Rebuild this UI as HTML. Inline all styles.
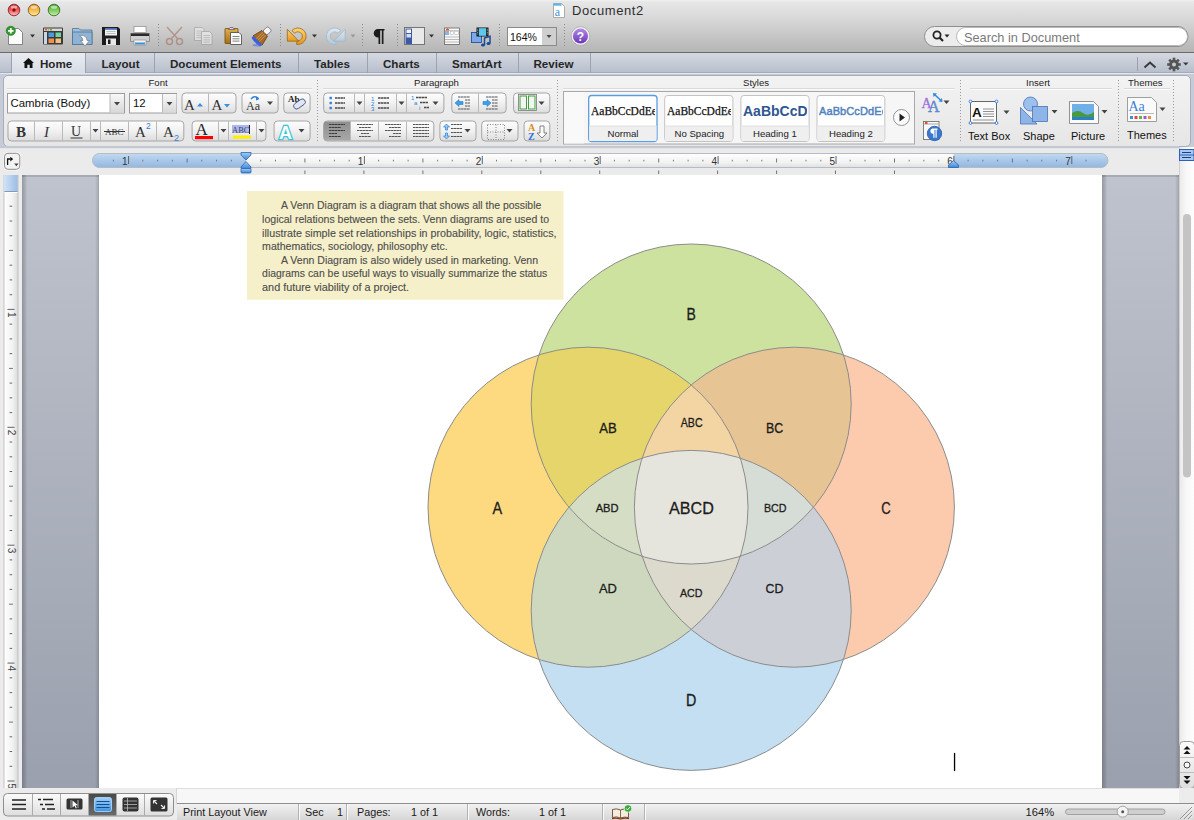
<!DOCTYPE html>
<html><head><meta charset="utf-8">
<style>
*{margin:0;padding:0;box-sizing:border-box}
html,body{width:1194px;height:820px;overflow:hidden;background:#ececec;font-family:"Liberation Sans",sans-serif;color:#222}
.a{position:absolute}
#top{left:0;top:0;width:1194px;height:53px;background:linear-gradient(#e8e8e8,#d0d0d0 50%,#b5b5b5);border-bottom:1px solid #6a6a6a;border-top:1px solid #efefef}
#tabs{left:0;top:53px;width:1194px;height:20px;background:linear-gradient(#d5d9e2,#b8bfcc);border-bottom:1px solid #a4abbb}
#ribbg{left:0;top:73px;width:1194px;height:74px;background:linear-gradient(#e3e6ec 0,#e3e6ec 1px,#c6ccd7 1px)}
#ribbon{left:3px;top:75px;width:1188px;height:72px;border-radius:5px;background:linear-gradient(#f3f3f3,#e6e6e6);border:1px solid #a9aeb8}
#rulerbg{left:0;top:147px;width:1179px;height:28px;background:#ebebeb}
#docarea{left:22px;top:175px;width:1157px;height:613px;background:linear-gradient(#bec3cd,#9aa0ad)}
#page{left:99px;top:175px;width:1003px;height:613px;background:#fff}
#hscroll{left:177px;top:788px;width:1017px;height:16px;background:linear-gradient(#f6f6f6,#e6e6e6)}
#status{left:177px;top:803px;width:1017px;height:17px;background:linear-gradient(#e9e9e9,#d8d8d8);border-top:1px solid #8a8a8a}
#vscroll{left:1179px;top:147px;width:15px;height:641px;background:linear-gradient(90deg,#e6e6e6,#fafafa)}
.t{position:absolute;white-space:nowrap}
</style></head><body>
<div id="top" class="a"></div>

<!-- TITLE + TOOLBAR -->
<svg class="a" style="left:0;top:0" width="1194" height="52">
<defs>
<linearGradient id="gR" x1="0" y1="0" x2="0" y2="1"><stop offset="0" stop-color="#c8282a"/><stop offset="0.5" stop-color="#f05a5a"/><stop offset="1" stop-color="#ffc0c0"/></linearGradient>
<linearGradient id="gY" x1="0" y1="0" x2="0" y2="1"><stop offset="0" stop-color="#d8861a"/><stop offset="0.5" stop-color="#f4b850"/><stop offset="1" stop-color="#ffec9a"/></linearGradient>
<linearGradient id="gG" x1="0" y1="0" x2="0" y2="1"><stop offset="0" stop-color="#3e9a2a"/><stop offset="0.5" stop-color="#7acb5a"/><stop offset="1" stop-color="#c8f0a8"/></linearGradient>
<linearGradient id="gFold" x1="0" y1="0" x2="0" y2="1"><stop offset="0" stop-color="#a9c6e0"/><stop offset="1" stop-color="#5f8db6"/></linearGradient>
<linearGradient id="gPaste" x1="0" y1="0" x2="0" y2="1"><stop offset="0" stop-color="#e0b052"/><stop offset="1" stop-color="#a86e12"/></linearGradient>
<linearGradient id="gHelp" x1="0" y1="0" x2="0" y2="1"><stop offset="0" stop-color="#b38be8"/><stop offset="1" stop-color="#6a34b8"/></linearGradient>
</defs>
<circle cx="14" cy="10" r="5.8" fill="url(#gR)" stroke="#7e2a2a" stroke-width="0.9"/>
<ellipse cx="14" cy="7.2" rx="3.2" ry="1.6" fill="#fff" opacity="0.55"/>
<circle cx="14" cy="10" r="1.7" fill="#8a0c0c"/>
<circle cx="34" cy="10" r="5.8" fill="url(#gY)" stroke="#8a5e1a" stroke-width="0.9"/>
<ellipse cx="34" cy="7.2" rx="3.2" ry="1.6" fill="#fff" opacity="0.55"/>
<circle cx="54" cy="10" r="5.8" fill="url(#gG)" stroke="#3a6e2a" stroke-width="0.9"/>
<ellipse cx="54" cy="7.2" rx="3.2" ry="1.6" fill="#fff" opacity="0.55"/>
<!-- title doc icon -->
<path d="M553.5 3.5h8l3 3v11h-11z" fill="#fff" stroke="#9a9a9a" stroke-width="0.8"/>
<rect x="553.5" y="3.5" width="8" height="2.2" fill="#5fb4e6"/>
<text x="554.8" y="15.8" font-family="Liberation Serif" font-size="12" fill="#4a8fd0">a</text>
<!-- new doc -->
<path d="M8.5 28.5h10l4 4v12h-14z" fill="#fbfbfb" stroke="#7a7a7a" stroke-width="0.9"/>
<circle cx="10.8" cy="30.8" r="4.6" fill="#2f9a2c" stroke="#1e6e1c" stroke-width="0.6"/>
<path d="M10.8 28v5.6M8 30.8h5.6" stroke="#fff" stroke-width="1.8"/>
<path d="M30 34.5h5l-2.5 3z" fill="#333"/>
<!-- gallery -->
<rect x="43" y="27.5" width="20" height="17" rx="1" fill="#3b3b3b"/>
<rect x="44" y="28.5" width="18" height="2.5" fill="#d8d8d8"/>
<circle cx="46" cy="29.7" r="0.9" fill="#e04030"/><circle cx="48.5" cy="29.7" r="0.9" fill="#e0a020"/><circle cx="51" cy="29.7" r="0.9" fill="#40a030"/>
<rect x="44" y="32" width="3" height="12" fill="#c9d6e6"/>
<rect x="48.5" y="32.5" width="5.5" height="4.5" fill="#4b9be0"/><rect x="55.5" y="32.5" width="5.5" height="4.5" fill="#6fd4a0"/>
<rect x="48.5" y="38.5" width="5.5" height="4.5" fill="#f0904a"/><rect x="55.5" y="38.5" width="5.5" height="4.5" fill="#f5c07a"/>
<!-- open folder -->
<path d="M72.5 31v-2.5h6.5l1.5 1.5h11.5v14.5h-19.5z" fill="url(#gFold)" stroke="#4d7498" stroke-width="0.8"/>
<path d="M72.5 32h19.5v12.5h-19.5z" fill="#8fb3d4" stroke="#4d7498" stroke-width="0.8"/>
<path d="M79.5 35.5q7-1 7.5 5h2.5l-4.5 5.5-4.5-5.5h2.5q-0.5-3.5-3.5-5z" fill="#fff" stroke="#6a6a6a" stroke-width="0.6"/>
<!-- floppy -->
<path d="M102 27h16l2 2v16h-18z" fill="#1c1c1c"/>
<rect x="105" y="28" width="12" height="7.5" fill="#f2f2f2"/>
<rect x="105" y="28" width="12" height="1.8" fill="#4a6fb8"/>
<path d="M106.5 31.5h9M106.5 33.5h9" stroke="#aaa" stroke-width="0.7"/>
<rect x="106" y="38.5" width="10" height="6.5" fill="#e8e8e8"/>
<rect x="108" y="39.5" width="2.5" height="4.5" fill="#1c1c1c"/>
<!-- printer -->
<rect x="134" y="26.5" width="12" height="6" fill="#fdfdfd" stroke="#8a8a8a" stroke-width="0.7"/>
<path d="M130.5 33.5h19v8h-19z" fill="#cfcfcf" stroke="#777" stroke-width="0.7"/>
<rect x="131" y="33.5" width="18" height="2.5" fill="#2a2a2a"/>
<rect x="134" y="40" width="12" height="5" fill="#f2f2f2" stroke="#888" stroke-width="0.6"/>
<rect x="135" y="42.5" width="10" height="2" fill="#3a8fd0"/>
<!-- separators -->
<g stroke="#8a8a8a" stroke-width="1" stroke-dasharray="1 2">
<path d="M158.5 24v24M280.5 24v24M362.5 24v24M397.5 24v24M499.5 24v24M564.5 24v24"/>
</g>
<!-- scissors (disabled) -->
<g opacity="0.45" fill="none" stroke="#9a5a44" stroke-width="1.5">
<path d="M167 27l11 12M182 27l-11 12"/>
<circle cx="169.5" cy="41.5" r="3"/><circle cx="179.5" cy="41.5" r="3"/>
</g>
<!-- copy (disabled) -->
<g opacity="0.55"><path d="M194.5 27.5h7.5l2 2v11h-9.5z" fill="#f2f2f2" stroke="#8a8a8a" stroke-width="0.8"/>
<path d="M196.5 31h5M196.5 33.2h5M196.5 35.4h5M196.5 37.6h5" stroke="#999" stroke-width="0.7"/>
<path d="M201.5 31.5h8l2.5 2.5v10.5h-10.5z" fill="#f6f6f6" stroke="#8a8a8a" stroke-width="0.8"/>
<path d="M203.5 35.5h6.5M203.5 37.7h6.5M203.5 39.9h6.5M203.5 42.1h6.5" stroke="#999" stroke-width="0.7"/></g>
<!-- paste -->
<rect x="225" y="28.5" width="13" height="15" rx="0.5" fill="url(#gPaste)" stroke="#6e4a10" stroke-width="0.8"/>
<path d="M228.5 29.5l1.5-2h3l1.5 2z" fill="#ddd" stroke="#555" stroke-width="0.7"/>
<path d="M230.5 32.5h8.5l2.5 2.5v9.5h-11z" fill="#fafafa" stroke="#444" stroke-width="0.8"/>
<path d="M232.5 36.5h7M232.5 38.8h7M232.5 41.1h7" stroke="#666" stroke-width="0.8"/>
<!-- brush -->
<g transform="translate(-2.5 1.5) rotate(45 264 35)">
<rect x="261" y="23.5" width="6" height="7" rx="1.8" fill="#f4f4f4" stroke="#6a6a6a" stroke-width="0.8"/>
<path d="M260 30.5h8l2.5 10h-13z" fill="#a36a2a" stroke="#5a3a10" stroke-width="0.7"/>
<path d="M262 31v9.5M264 31v9.5M266 31v9.5" stroke="#dca458" stroke-width="0.7"/>
<path d="M257.5 40.5h13l-0.5 2.5q-6 1.5-12 0z" fill="#3a5ee0"/>
</g>
<ellipse cx="257" cy="45.3" rx="4.5" ry="1.2" fill="#4a6ae8" opacity="0.5"/>
<!-- undo -->
<defs><linearGradient id="gUndo" x1="0" y1="0" x2="0" y2="1"><stop offset="0" stop-color="#fbd678"/><stop offset="1" stop-color="#e8961a"/></linearGradient>
<linearGradient id="gRedo" x1="0" y1="0" x2="0" y2="1"><stop offset="0" stop-color="#dfe9f2"/><stop offset="1" stop-color="#b5cadb"/></linearGradient></defs>
<g id="undoI">
<path d="M292 30.5A8.2 8.2 0 1 1 296.5 44.3L297.1 40.6A4.4 4.4 0 1 0 294.6 33.4Z" fill="url(#gUndo)" stroke="#9a6410" stroke-width="0.8"/>
<path d="M287.3 29.3v11.9h11.6z" fill="url(#gUndo)" stroke="#9a6410" stroke-width="0.8"/>
</g>
<path d="M312 34.5h5l-2.5 3z" fill="#333"/>
<g transform="translate(632.5 0) scale(-1 1)">
<path d="M292 30.5A8.2 8.2 0 1 1 296.5 44.3L297.1 40.6A4.4 4.4 0 1 0 294.6 33.4Z" fill="url(#gRedo)" stroke="#9fb6c8" stroke-width="0.8"/>
<path d="M287.3 29.3v11.9h11.6z" fill="url(#gRedo)" stroke="#9fb6c8" stroke-width="0.8"/>
</g>
<path d="M350.5 34.5h5l-2.5 3z" fill="#999"/>
<!-- pilcrow -->
<path d="M378 29h6.5v1.6h-1v13.4h-1.7v-13.4h-1.6v13.4h-1.7v-6.4h-0.5a4.3 4.3 0 0 1 0-8.6z" fill="#1c1c1c"/>
<!-- sidebar -->
<rect x="404.5" y="27.5" width="20" height="17" fill="#f2f2f2" stroke="#6a6a6a" stroke-width="0.9"/><rect x="412" y="28" width="12" height="16" fill="#e9e9e9"/>
<rect x="405.5" y="28.5" width="6.5" height="15.5" fill="#3a5aa8"/>
<rect x="406.5" y="29.5" width="4.5" height="3.5" fill="#f4f6fa"/><rect x="406.5" y="34" width="4.5" height="3.5" fill="#d6deee"/>
<path d="M429 34.5h5l-2.5 3z" fill="#333"/>
<!-- gallery2 -->
<rect x="444.5" y="28" width="15" height="16.5" fill="#f8f8f8" stroke="#666" stroke-width="0.8"/>
<path d="M445 30.5h14" stroke="#bbb" stroke-width="0.8"/>
<path d="M445.8 30.5q0.5-2.5 1.7-2.2q1.2 -0.3 1.7 2.2z" fill="#e8501a"/>
<rect x="445" y="31" width="4" height="4" fill="#8ab4e0"/>
<rect x="450.2" y="31.5" width="3.5" height="3" fill="#fff" stroke="#aaa" stroke-width="0.5"/><rect x="454.8" y="31.5" width="3.5" height="3" fill="#fff" stroke="#aaa" stroke-width="0.5"/>
<path d="M445 37h14M445 39.5h14M445 42h14" stroke="#aaa" stroke-width="0.8"/>
<!-- media -->
<rect x="471.5" y="32.5" width="10" height="10" fill="#7aa8e8" stroke="#2a4f98" stroke-width="0.9"/>
<rect x="476.5" y="27.5" width="12" height="9" fill="#151515"/>
<rect x="478.8" y="28.2" width="7.4" height="7.6" fill="#5cc8ee"/>
<path d="M477.6 28.8v6.4M487.4 28.8v6.4" stroke="#ccc" stroke-width="0.8" stroke-dasharray="0.8 0.8"/>
<path d="M484.5 45v-7l5.5-1.8v7" fill="none" stroke="#1a4a98" stroke-width="1.5"/>
<ellipse cx="483" cy="45" rx="2" ry="1.5" fill="#1a4a98"/><ellipse cx="488.5" cy="43.5" rx="2" ry="1.5" fill="#1a4a98"/>
<!-- zoom box -->
<rect x="507.5" y="27.5" width="49" height="18" fill="#fff" stroke="#8a8a8a" stroke-width="1"/>
<rect x="542" y="28" width="14" height="17" fill="#cfcfcf"/>
<path d="M546.5 35h5l-2.5 3z" fill="#444"/>
<text x="510" y="40.5" font-family="Liberation Sans" font-size="11" fill="#111" textLength="27" lengthAdjust="spacingAndGlyphs">164%</text>
<!-- help -->
<circle cx="580.5" cy="36" r="9.3" fill="#f2f2f2" stroke="#999" stroke-width="0.6"/>
<circle cx="580.5" cy="36" r="7.6" fill="url(#gHelp)"/>
<text x="580.5" y="40.5" text-anchor="middle" font-family="Liberation Sans" font-weight="bold" font-size="12" fill="#fff">?</text>
<!-- search -->
<rect x="924.5" y="26.5" width="263.5" height="20" rx="10" fill="#ececec" stroke="#8e8e8e" stroke-width="1"/>
<rect x="956.5" y="27.5" width="231" height="18" rx="9" fill="#fff" stroke="#a8a8a8" stroke-width="0.8"/>
<circle cx="937" cy="35" r="3.6" fill="none" stroke="#222" stroke-width="1.8"/>
<path d="M939.5 37.5l3.5 3.5" stroke="#222" stroke-width="2.2"/>
<path d="M944.5 34.5h5l-2.5 3z" fill="#222"/>
<text x="964" y="41.8" font-family="Liberation Sans" font-size="12.8" fill="#7a7a7a" textLength="115.7" lengthAdjust="spacingAndGlyphs">Search in Document</text>
</svg>
<div class="t" style="left:572px;top:3px;font-size:13px;letter-spacing:0.6px;color:#2e2e2e">Document2</div>

<div id="tabs" class="a"></div>
<svg class="a" style="left:0;top:53px" width="1194" height="21">
<defs>
<linearGradient id="gTabA" x1="0" y1="0" x2="0" y2="1"><stop offset="0" stop-color="#eaedf2"/><stop offset="1" stop-color="#d6dbe4"/></linearGradient>
</defs>
<rect x="12" y="0" width="73" height="21" fill="url(#gTabA)"/>
<g stroke="#9da3ae" stroke-width="1">
<path d="M11.5 0v20M85.5 0v20M154.5 0v20M298.5 0v20M367.5 0v20M436.5 0v20M518.5 0v20M590.5 0v20"/>
</g>
<path d="M1137.5 4v14" stroke="#9da3ae"/>

<path d="M1144.5 14.5l5.5-5 5.5 5" fill="none" stroke="#3a3a3a" stroke-width="2"/>
<!-- gear -->
<g transform="translate(1174,11.5)">
<circle r="4.8" fill="#555"/>
<g fill="#555"><rect x="-1.3" y="-6.8" width="2.6" height="13.6"/><rect x="-6.8" y="-1.3" width="13.6" height="2.6"/>
<rect x="-1.3" y="-6.8" width="2.6" height="13.6" transform="rotate(45)"/><rect x="-1.3" y="-6.8" width="2.6" height="13.6" transform="rotate(-45)"/></g>
<circle r="2" fill="#c6ccd7"/>
</g>
<path d="M1183 9.5h5.5l-2.75 3z" fill="#3a3a3a"/>
<!-- house -->
<path d="M23 10l5.5-5 5.5 5h-1.5v5h-2.8v-3.2h-2.4v3.2h-2.8v-5z" fill="#111"/>
</svg>
<div class="t" style="left:40px;top:57px;font-size:11.6px;font-weight:bold;color:#262626">Home</div>
<div class="t" style="left:101.5px;top:57px;font-size:11.6px;font-weight:bold;color:#262626">Layout</div>
<div class="t" style="left:170px;top:57px;font-size:11.6px;font-weight:bold;color:#262626">Document Elements</div>
<div class="t" style="left:314px;top:57px;font-size:11.6px;font-weight:bold;color:#262626">Tables</div>
<div class="t" style="left:383px;top:57px;font-size:11.6px;font-weight:bold;color:#262626">Charts</div>
<div class="t" style="left:452px;top:57px;font-size:11.6px;font-weight:bold;color:#262626">SmartArt</div>
<div class="t" style="left:533.5px;top:57px;font-size:11.6px;font-weight:bold;color:#262626">Review</div>

<div id="ribbg" class="a"></div>
<div id="ribbon" class="a"></div>
<!--RIB--><svg class="a" style="left:0;top:73px" width="1194" height="76" viewBox="0 73 1194 76">
<defs>
<linearGradient id="gBtn" x1="0" y1="0" x2="0" y2="1"><stop offset="0" stop-color="#fdfdfd"/><stop offset="0.5" stop-color="#f1f1f1"/><stop offset="1" stop-color="#dcdcdc"/></linearGradient>
<linearGradient id="gPress" x1="0" y1="0" x2="0" y2="1"><stop offset="0" stop-color="#8e8e8e"/><stop offset="1" stop-color="#a8a8a8"/></linearGradient>
<linearGradient id="gDrop" x1="0" y1="0" x2="0" y2="1"><stop offset="0" stop-color="#f8f8f8"/><stop offset="1" stop-color="#d8d8d8"/></linearGradient>
<linearGradient id="gHdr" x1="0" y1="0" x2="0" y2="1"><stop offset="0" stop-color="#f3f3f3"/><stop offset="1" stop-color="#e6e6e6"/></linearGradient>
</defs>
<g stroke="#dadada"><path d="M7 88.5h305M323 88.5h229M563 88.5h392M970 88.5h142M1124 88.5h46"/></g>
<g stroke="#fafafa"><path d="M7 89.5h305M323 89.5h229M563 89.5h392M970 89.5h142M1124 89.5h46"/></g>
<g stroke="#9a9a9a" stroke-dasharray="1 2"><path d="M317.5 80v63M557.5 80v63M960.5 80v63M1118.5 80v63M1173.5 80v63"/></g>
<rect x="7.5" y="93.5" width="117" height="19.5" fill="#fff" stroke="#9c9c9c"/>
<rect x="110" y="94" width="14" height="18.5" fill="url(#gDrop)"/><path d="M110 94v18.5" stroke="#b8b8b8"/><path d="M114 102.0h6l-3 3.5z" fill="#444"/>
<rect x="129.5" y="93.5" width="47" height="19.5" fill="#fff" stroke="#9c9c9c"/>
<rect x="162.5" y="94" width="14" height="18.5" fill="url(#gDrop)"/><path d="M162.5 94v18.5" stroke="#b8b8b8"/><path d="M166.5 102.0h6l-3 3.5z" fill="#444"/>
<rect x="182.0" y="93.0" width="54.0" height="20.0" rx="3.5" fill="url(#gBtn)" stroke="#a5a5a5"/><path d="M208.5 93.5v19.0" stroke="#b9b9b9"/>
<text x="184" y="110" font-family="Liberation Serif" font-size="15" fill="#333">A</text><path d="M197 106.5l3-3.5 3 3.5z" fill="#3a8ee0"/>
<text x="211.5" y="110" font-family="Liberation Serif" font-size="15" fill="#333">A</text><path d="M224 104h6l-3 3.5z" fill="#3a8ee0"/>
<rect x="242.0" y="93.0" width="36.10000000000002" height="20.0" rx="3.5" fill="url(#gBtn)" stroke="#a5a5a5"/>
<text x="246" y="110" font-family="Liberation Serif" font-size="12" fill="#333">Aa</text><path d="M251 99q3.5-4 7.5-0.5" fill="none" stroke="#2f7fd8" stroke-width="1.5"/><path d="M256 96.5l3.5 2.5-3.5 1.5z" fill="#2f7fd8"/><path d="M267 101.5h6l-3 3.5z" fill="#444"/>
<rect x="283.8" y="93.0" width="26.30000000000001" height="20.0" rx="3.5" fill="url(#gBtn)" stroke="#a5a5a5"/>
<text x="288" y="102" font-family="Liberation Serif" font-size="9" font-weight="bold" fill="#222">Ab</text><rect x="293" y="101" width="13" height="6" rx="3" transform="rotate(-35 299.5 104)" fill="#dfe6f2" stroke="#4a5a88" stroke-width="0.9"/>
<rect x="8.0" y="121.0" width="175.8" height="20.0" rx="3.5" fill="url(#gBtn)" stroke="#a5a5a5"/><path d="M34.5 121.5v19.0" stroke="#b9b9b9"/><path d="M62.5 121.5v19.0" stroke="#b9b9b9"/><path d="M90.5 121.5v19.0" stroke="#b9b9b9"/><path d="M100.5 121.5v19.0" stroke="#b9b9b9"/><path d="M128.5 121.5v19.0" stroke="#b9b9b9"/><path d="M156.5 121.5v19.0" stroke="#b9b9b9"/>
<text x="16" y="137" font-family="Liberation Serif" font-weight="bold" font-size="15" fill="#333">B</text>
<text x="44" y="137" font-family="Liberation Serif" font-style="italic" font-size="15" fill="#333">I</text>
<text x="71" y="136" font-family="Liberation Serif" font-size="14" fill="#333">U</text><path d="M70.5 138h12" stroke="#333"/>
<path d="M92.5 129.0h6l-3 3.5z" fill="#444"/>
<text x="105" y="135" font-family="Liberation Serif" font-size="9" fill="#333">ABC</text><path d="M104 131.5h21" stroke="#333"/>
<text x="135" y="137" font-family="Liberation Serif" font-size="15" fill="#333">A</text><text x="146" y="129" font-family="Liberation Sans" font-size="8.5" fill="#2f7fd8">2</text>
<text x="163" y="137" font-family="Liberation Serif" font-size="15" fill="#333">A</text><text x="174" y="140.5" font-family="Liberation Sans" font-size="9" fill="#2f7fd8">2</text>
<rect x="192.1" y="121.0" width="73.79999999999998" height="20.0" rx="3.5" fill="url(#gBtn)" stroke="#a5a5a5"/><path d="M218.5 121.5v19.0" stroke="#b9b9b9"/><path d="M228.5 121.5v19.0" stroke="#b9b9b9"/><path d="M256.5 121.5v19.0" stroke="#b9b9b9"/>
<text x="195.5" y="135" font-family="Liberation Serif" font-size="17" fill="#222">A</text><rect x="195" y="136" width="18" height="3.2" fill="#f00"/><path d="M220.5 129.0h6l-3 3.5z" fill="#444"/>
<rect x="232" y="125" width="18" height="8" fill="#a9b8f0"/><text x="232" y="132.5" font-family="Liberation Serif" font-size="8.5" fill="#445">ABC</text><rect x="233" y="135.5" width="18" height="3.2" fill="#ffef00"/><path d="M249.5 125v9" stroke="#222"/><path d="M258.5 129.0h6l-3 3.5z" fill="#444"/>
<rect x="274.1" y="121.0" width="36.0" height="20.0" rx="3.5" fill="url(#gBtn)" stroke="#a5a5a5"/>
<text x="279" y="138.5" font-family="Liberation Sans" font-weight="bold" font-size="18" fill="#fff" stroke="#3cc6dc" stroke-width="2.6" paint-order="stroke">A</text><path d="M298.5 129.0h6l-3 3.5z" fill="#444"/>
<rect x="323.7" y="93.0" width="120.19999999999999" height="20.0" rx="3.5" fill="url(#gBtn)" stroke="#a5a5a5"/><path d="M354.5 93.5v19.0" stroke="#b9b9b9"/><path d="M364.5 93.5v19.0" stroke="#b9b9b9"/><path d="M396.5 93.5v19.0" stroke="#b9b9b9"/><path d="M406.5 93.5v19.0" stroke="#b9b9b9"/>
<rect x="329.5" y="96.8" width="2.4" height="2.4" fill="#2f7fd8"/><path d="M335 98h10" stroke="#4a4a4a" stroke-width="1.3" stroke-dasharray="2.5 0.4"/>
<rect x="329.5" y="101.8" width="2.4" height="2.4" fill="#2f7fd8"/><path d="M335 103h10" stroke="#4a4a4a" stroke-width="1.3" stroke-dasharray="2.5 0.4"/>
<rect x="329.5" y="106.8" width="2.4" height="2.4" fill="#2f7fd8"/><path d="M335 108h10" stroke="#4a4a4a" stroke-width="1.3" stroke-dasharray="2.5 0.4"/>
<path d="M356.5 101.5h6l-3 3.5z" fill="#444"/>
<text x="371" y="100.5" font-family="Liberation Sans" font-size="6" fill="#2f7fd8">1</text><path d="M378 98h11" stroke="#4a4a4a" stroke-width="1.3" stroke-dasharray="2.5 0.4"/>
<text x="371" y="105.5" font-family="Liberation Sans" font-size="6" fill="#2f7fd8">2</text><path d="M378 103h11" stroke="#4a4a4a" stroke-width="1.3" stroke-dasharray="2.5 0.4"/>
<text x="371" y="110.5" font-family="Liberation Sans" font-size="6" fill="#2f7fd8">3</text><path d="M378 108h11" stroke="#4a4a4a" stroke-width="1.3" stroke-dasharray="2.5 0.4"/>
<path d="M398.5 101.5h6l-3 3.5z" fill="#444"/>
<text x="411" y="100" font-family="Liberation Sans" font-size="6" fill="#2f7fd8">1</text><text x="414" y="105" font-family="Liberation Sans" font-size="6" fill="#2f7fd8">a</text><text x="419" y="110" font-family="Liberation Sans" font-size="6" fill="#2f7fd8">i</text>
<path d="M416 97.5h11M420 102.5h8M424 107.5h5" stroke="#4a4a4a" stroke-width="1.3" stroke-dasharray="2.5 0.4"/><path d="M432.5 101.5h6l-3 3.5z" fill="#444"/>
<rect x="451.8" y="93.0" width="54.30000000000001" height="20.0" rx="3.5" fill="url(#gBtn)" stroke="#a5a5a5"/><path d="M478.5 93.5v19.0" stroke="#b9b9b9"/>
<path d="M458 97h12M465 100h5M465 103h5M465 106h5M458 109h12" stroke="#555" stroke-width="1.2" stroke-dasharray="2.5 0.4"/><path d="M455 103l4-3.5v2h4v3h-4v2z" fill="#3aa0ec" stroke="#1e6cb8" stroke-width="0.5"/>
<path d="M486 97h12M492 100h6M492 103h6M492 106h6M486 109h12" stroke="#555" stroke-width="1.2" stroke-dasharray="2.5 0.4"/><path d="M491 103l-4-3.5v2h-4v3h4v2z" fill="#3aa0ec" stroke="#1e6cb8" stroke-width="0.5"/>
<rect x="513.6" y="93.0" width="36.19999999999993" height="20.0" rx="3.5" fill="url(#gBtn)" stroke="#a5a5a5"/>
<rect x="518.5" y="94.5" width="18" height="16" fill="#fafafa" stroke="#777" stroke-width="0.8"/><rect x="520" y="96" width="6.5" height="13" fill="#f4f4f4" stroke="#3aa33a" stroke-width="1"/><rect x="528.5" y="96" width="6.5" height="13" fill="#f4f4f4" stroke="#3aa33a" stroke-width="1"/><path d="M538.5 101.5h6l-3 3.5z" fill="#444"/>
<rect x="323.7" y="121.0" width="110.10000000000002" height="20.0" rx="3.5" fill="url(#gBtn)" stroke="#a5a5a5"/><path d="M326.7 121.5h23.80000000000001v19.0h-23.80000000000001q-3 0 -3 -3v-13.0q0 -3 3 -3z" fill="url(#gPress)"/><path d="M350.5 121.5v19.0" stroke="#b9b9b9"/><path d="M378.5 121.5v19.0" stroke="#b9b9b9"/><path d="M406.5 121.5v19.0" stroke="#b9b9b9"/>
<path d="M329 124.5h16" stroke="#3a3a3a" stroke-width="1.2" stroke-dasharray="2.5 0.4"/><path d="M329 127.5h12" stroke="#3a3a3a" stroke-width="1.2" stroke-dasharray="2.5 0.4"/><path d="M329 130.5h16" stroke="#3a3a3a" stroke-width="1.2" stroke-dasharray="2.5 0.4"/><path d="M329 133.5h8" stroke="#3a3a3a" stroke-width="1.2" stroke-dasharray="2.5 0.4"/><path d="M329 136.5h12" stroke="#3a3a3a" stroke-width="1.2" stroke-dasharray="2.5 0.4"/>
<path d="M357 124.5h16" stroke="#555" stroke-width="1.2" stroke-dasharray="2.5 0.4"/><path d="M359 127.5h12" stroke="#555" stroke-width="1.2" stroke-dasharray="2.5 0.4"/><path d="M357 130.5h16" stroke="#555" stroke-width="1.2" stroke-dasharray="2.5 0.4"/><path d="M361 133.5h8" stroke="#555" stroke-width="1.2" stroke-dasharray="2.5 0.4"/><path d="M359 136.5h12" stroke="#555" stroke-width="1.2" stroke-dasharray="2.5 0.4"/>
<path d="M385 124.5h16" stroke="#555" stroke-width="1.2" stroke-dasharray="2.5 0.4"/><path d="M389 127.5h12" stroke="#555" stroke-width="1.2" stroke-dasharray="2.5 0.4"/><path d="M385 130.5h16" stroke="#555" stroke-width="1.2" stroke-dasharray="2.5 0.4"/><path d="M393 133.5h8" stroke="#555" stroke-width="1.2" stroke-dasharray="2.5 0.4"/><path d="M389 136.5h12" stroke="#555" stroke-width="1.2" stroke-dasharray="2.5 0.4"/>
<path d="M413 124.5h16" stroke="#555" stroke-width="1.2" stroke-dasharray="2.5 0.4"/><path d="M413 127.5h16" stroke="#555" stroke-width="1.2" stroke-dasharray="2.5 0.4"/><path d="M413 130.5h16" stroke="#555" stroke-width="1.2" stroke-dasharray="2.5 0.4"/><path d="M413 133.5h16" stroke="#555" stroke-width="1.2" stroke-dasharray="2.5 0.4"/><path d="M413 136.5h16" stroke="#555" stroke-width="1.2" stroke-dasharray="2.5 0.4"/>
<rect x="439.9" y="121.0" width="36.10000000000002" height="20.0" rx="3.5" fill="url(#gBtn)" stroke="#a5a5a5"/>
<path d="M446.5 124l-3 3h2v3h2v-3h2z M446.5 139l-3-3h2v-3h2v3h2z" fill="#9cc8f2" stroke="#2f7fd8" stroke-width="0.7"/>
<path d="M451 124.5h11" stroke="#555" stroke-width="1.2" stroke-dasharray="2.5 0.4"/><path d="M451 128.5h11" stroke="#555" stroke-width="1.2" stroke-dasharray="2.5 0.4"/><path d="M451 132.5h11" stroke="#555" stroke-width="1.2" stroke-dasharray="2.5 0.4"/><path d="M451 136.5h11" stroke="#555" stroke-width="1.2" stroke-dasharray="2.5 0.4"/>
<path d="M464.5 129.0h6l-3 3.5z" fill="#444"/>
<rect x="481.7" y="121.0" width="36.30000000000001" height="20.0" rx="3.5" fill="url(#gBtn)" stroke="#a5a5a5"/>
<rect x="487.5" y="124.5" width="17" height="15" fill="none" stroke="#888" stroke-dasharray="1 1.5"/><path d="M496 124.5v15M487.5 132h17" stroke="#888" stroke-dasharray="1 1.5"/><path d="M506.5 129.0h6l-3 3.5z" fill="#444"/>
<rect x="524.1" y="121.0" width="25.699999999999932" height="20.0" rx="3.5" fill="url(#gBtn)" stroke="#a5a5a5"/>
<text x="528" y="131" font-family="Liberation Serif" font-weight="bold" font-size="10" fill="#d89018">A</text><text x="528" y="140" font-family="Liberation Serif" font-weight="bold" font-size="10" fill="#2f6fd8">Z</text>
<path d="M540 126v7h-3l5 5 5-5h-3v-7z" fill="#fff" stroke="#666" stroke-width="0.8"/>
<rect x="563.5" y="91.5" width="351" height="52.5" fill="#f6f6f6" stroke="#a9a9a9"/>
<rect x="564" y="92" width="20" height="51.5" fill="#f9f9f9"/>
<rect x="588.7" y="95.5" width="68.29999999999995" height="46" rx="3" fill="#fff" stroke="#5a9de0" stroke-width="1.3"/><path d="M589.2 126h67.29999999999995v15h-67.29999999999995z" fill="#efefef"/><path d="M589.2 126h67.29999999999995" stroke="#e0e0e0"/><rect x="664.7" y="95.5" width="68.19999999999993" height="46" rx="3" fill="#fff" stroke="#c3c3c3" stroke-width="1"/><path d="M665.2 126h67.19999999999993v15h-67.19999999999993z" fill="#efefef"/><path d="M665.2 126h67.19999999999993" stroke="#e0e0e0"/><rect x="740.9" y="95.5" width="68.20000000000005" height="46" rx="3" fill="#fff" stroke="#c3c3c3" stroke-width="1"/><path d="M741.4 126h67.20000000000005v15h-67.20000000000005z" fill="#efefef"/><path d="M741.4 126h67.20000000000005" stroke="#e0e0e0"/><rect x="817.0" y="95.5" width="67.79999999999995" height="46" rx="3" fill="#fff" stroke="#c3c3c3" stroke-width="1"/><path d="M817.5 126h66.79999999999995v15h-66.79999999999995z" fill="#efefef"/><path d="M817.5 126h66.79999999999995" stroke="#e0e0e0"/>
<circle cx="901.5" cy="117.5" r="8" fill="#fbfbfb" stroke="#888" stroke-width="0.9"/><path d="M899.5 113.5l5.5 4-5.5 4z" fill="#222"/>
<text x="921.5" y="108" font-family="Liberation Serif" font-size="14" fill="#a070d8" stroke="#a070d8" stroke-width="0.3">A</text><text x="928" y="112" font-family="Liberation Serif" font-size="16" fill="#5f8fdc" stroke="#4a78c8" stroke-width="0.4" opacity="0.95">A</text><path d="M934.5 94.5l6.5 6" stroke="#2f8ae0" stroke-width="1.6"/><path d="M933 93l4 0.5-3.5 3.5z M942.5 102l-0.5-4-3.5 3.5z" fill="#2f8ae0"/><path d="M943.5 100.5h6l-3 3.5z" fill="#444"/>
<rect x="923.5" y="121.5" width="15.5" height="18" fill="#f8f8f8" stroke="#666" stroke-width="0.8"/><path d="M924 124h14.5" stroke="#aaa"/><rect x="925" y="122" width="2.5" height="2" fill="#e05020"/><circle cx="934.5" cy="133.5" r="7.2" fill="#3a78d0" stroke="#2a5aa8" stroke-width="0.8"/><path d="M933 128.5h4.5v1.2h-0.8v8h-1.2v-8h-1v8h-1.2v-4h-0.3a2.6 2.6 0 0 1 0-5.2z" fill="#fff"/>
<rect x="970.5" y="101.5" width="26" height="21.5" fill="#fafafa" stroke="#555" stroke-width="0.9"/>
<text x="972" y="117" font-family="Liberation Sans" font-weight="bold" font-size="13.5" fill="#111">A</text><path d="M983 109h11M983 111.5h11M983 114h11M983 116.5h11M973 120h21" stroke="#777" stroke-width="0.8"/>
<g fill="#fff" stroke="#2f6fe8" stroke-width="0.9"><circle cx="970.5" cy="101.5" r="1.4"/><circle cx="996.5" cy="101.5" r="1.4"/><circle cx="970.5" cy="123" r="1.4"/><circle cx="996.5" cy="123" r="1.4"/></g><path d="M1003.5 110.5h6l-3 3.5z" fill="#444"/>
<path d="M1020.5 107.5v16.5h16.5z" fill="#8fb4e8" stroke="#4a74b8" stroke-width="0.8"/><circle cx="1030.5" cy="104" r="7" fill="#9cc0ee" stroke="#4a74b8" stroke-width="0.8"/><rect x="1032.5" y="106.5" width="15" height="15" fill="#8fb4e8" stroke="#4a74b8" stroke-width="0.8"/><path d="M1051.5 110.0h6l-3 3.5z" fill="#444"/>
<path d="M1069.5 101.5h24l5 5v17h-29z" fill="#fafafa" stroke="#777" stroke-width="0.8"/><rect x="1072" y="104" width="22" height="16" fill="#6fb0e8"/><path d="M1072 113q6-4 11 0t11-1v8h-22z" fill="#4a9a3a"/><rect x="1072" y="117" width="22" height="3" fill="#2a7fc8"/><path d="M1101.5 110.0h6l-3 3.5z" fill="#444"/>
<path d="M1127.5 97.5h24l5 5v19h-29z" fill="#fafafa" stroke="#888" stroke-width="0.8"/><text x="1128.5" y="111" font-family="Liberation Serif" font-size="14" fill="#3a7fd8">Aa</text><path d="M1130 113.5h24" stroke="#bbb"/>
<rect x="1130" y="116" width="3" height="3" fill="#3a8fd8"/><rect x="1134.5" y="116" width="3" height="3" fill="#e04848"/><rect x="1139" y="116" width="3" height="3" fill="#6ab04a"/><rect x="1143.5" y="116" width="3" height="3" fill="#a05ac8"/><rect x="1148" y="116" width="3" height="3" fill="#f08a3a"/><path d="M1159.5 107.5h6l-3 3.5z" fill="#444"/>
</svg>
<div class="t" style="left:148.5px;top:77px;font-size:9.6px;color:#1e1e1e">Font</div>
<div class="t" style="left:414px;top:77px;font-size:9.6px;color:#1e1e1e">Paragraph</div>
<div class="t" style="left:743px;top:77px;font-size:9.6px;color:#1e1e1e">Styles</div>
<div class="t" style="left:1026px;top:77px;font-size:9.6px;color:#1e1e1e">Insert</div>
<div class="t" style="left:1128px;top:77px;font-size:9.6px;color:#1e1e1e">Themes</div>
<div class="t" style="left:10.5px;top:96.5px;font-size:11.4px;color:#111">Cambria (Body)</div>
<div class="t" style="left:133px;top:96.5px;font-size:11.4px;color:#111">12</div>
<div class="t" style="left:591px;top:105px;font-size:11.5px;font-family:'Liberation Serif';color:#111;-webkit-text-stroke:0.25px #111;width:64px;overflow:hidden">AaBbCcDdEe</div>
<div class="t" style="left:667px;top:105px;font-size:11.5px;font-family:'Liberation Serif';color:#111;-webkit-text-stroke:0.25px #111;width:64px;overflow:hidden">AaBbCcDdEe</div>
<div class="t" style="left:743px;top:103px;font-size:14px;font-weight:bold;color:#2f5690;width:64px;overflow:hidden">AaBbCcDd</div>
<div class="t" style="left:819px;top:105px;font-size:11px;color:#4f82be;-webkit-text-stroke:0.45px #4f82be;width:64px;overflow:hidden;letter-spacing:0.1px">AaBbCcDdEe</div>
<div class="t" style="left:607.5px;top:127.5px;font-size:9.6px;color:#222">Normal</div>
<div class="t" style="left:674.5px;top:127.5px;font-size:9.6px;color:#222">No Spacing</div>
<div class="t" style="left:753px;top:127.5px;font-size:9.6px;color:#222">Heading 1</div>
<div class="t" style="left:829px;top:127.5px;font-size:9.6px;color:#222">Heading 2</div>
<div class="t" style="left:968px;top:129.5px;font-size:11px;color:#111">Text Box</div>
<div class="t" style="left:1023px;top:129.5px;font-size:11px;color:#111">Shape</div>
<div class="t" style="left:1071px;top:129.5px;font-size:11px;color:#111">Picture</div>
<div class="t" style="left:1127px;top:128.5px;font-size:11px;color:#111">Themes</div>
<!--/RIB-->
<div id="rulerbg" class="a"></div>
<!--RUL--><svg class="a" style="left:0;top:146px" width="1179" height="30" viewBox="0 146 1179 30">
<defs>
<linearGradient id="gRB" x1="0" y1="0" x2="0" y2="1"><stop offset="0" stop-color="#c6dcf3"/><stop offset="0.5" stop-color="#a9c7e8"/><stop offset="1" stop-color="#93b5de"/></linearGradient>
<linearGradient id="gRW" x1="0" y1="0" x2="0" y2="1"><stop offset="0" stop-color="#ffffff"/><stop offset="0.6" stop-color="#f3f3f3"/><stop offset="1" stop-color="#dedede"/></linearGradient>
<linearGradient id="gMk" x1="0" y1="0" x2="0" y2="1"><stop offset="0" stop-color="#a6cdf4"/><stop offset="1" stop-color="#3d86d8"/></linearGradient>
<clipPath id="rclip"><rect x="92.5" y="153" width="1015.5" height="14.5" rx="7.2"/></clipPath>
</defs>
<rect x="0" y="146" width="1179" height="2" fill="#c3c9d4"/><path d="M0 148.5h1179" stroke="#e4e4e4"/>
<rect x="3.5" y="152" width="17.5" height="18.5" rx="4.5" fill="#fafafa"/>
<rect x="4.5" y="153.3" width="15.3" height="16" rx="3.5" fill="#f3f3f3" stroke="#8d8d8d"/>
<path d="M7.6 165v-6h3" fill="none" stroke="#111" stroke-width="1.3"/><path d="M10.3 156.8l2.9 2.3-2.9 2.3z" fill="#111"/><path d="M14.2 163.6h4.4l-2.2 2.6z" fill="#444"/>
<g clip-path="url(#rclip)">
<rect x="92" y="153" width="1017" height="15" fill="url(#gRW)"/>
<rect x="92" y="153" width="154" height="15" fill="url(#gRB)"/>
<rect x="953.5" y="153" width="156" height="15" fill="url(#gRB)"/>
</g>
<rect x="92.5" y="153.5" width="1015.5" height="14" rx="7" fill="none" stroke="#b4bcc6"/>

<text x="127.6" y="164.5" text-anchor="end" font-family="Liberation Sans" font-size="10" fill="#333">1</text>
<text x="363.4" y="164.5" text-anchor="end" font-family="Liberation Sans" font-size="10" fill="#333">1</text>
<text x="481.3" y="164.5" text-anchor="end" font-family="Liberation Sans" font-size="10" fill="#333">2</text>
<text x="599.2" y="164.5" text-anchor="end" font-family="Liberation Sans" font-size="10" fill="#333">3</text>
<text x="717.1" y="164.5" text-anchor="end" font-family="Liberation Sans" font-size="10" fill="#333">4</text>
<text x="835.0" y="164.5" text-anchor="end" font-family="Liberation Sans" font-size="10" fill="#333">5</text>
<text x="952.9" y="164.5" text-anchor="end" font-family="Liberation Sans" font-size="10" fill="#333">6</text>
<text x="1070.8" y="164.5" text-anchor="end" font-family="Liberation Sans" font-size="10" fill="#333">7</text>
<path d="M113.4 159.8v1.6" stroke="#777" stroke-width="1"/>
<path d="M128.6 156v8" stroke="#555" stroke-width="0.9"/>
<path d="M142.8 159.8v1.6" stroke="#777" stroke-width="1"/>
<path d="M157.6 159.8v1.6" stroke="#777" stroke-width="1"/>
<path d="M172.3 159.8v1.6" stroke="#777" stroke-width="1"/>
<path d="M187.1 158.5v4" stroke="#666" stroke-width="0.9"/>
<path d="M201.8 159.8v1.6" stroke="#777" stroke-width="1"/>
<path d="M216.5 159.8v1.6" stroke="#777" stroke-width="1"/>
<path d="M231.3 159.8v1.6" stroke="#777" stroke-width="1"/>
<path d="M260.7 159.8v1.6" stroke="#777" stroke-width="1"/>
<path d="M275.5 159.8v1.6" stroke="#777" stroke-width="1"/>
<path d="M290.2 159.8v1.6" stroke="#777" stroke-width="1"/>
<path d="M304.9 158.5v4" stroke="#666" stroke-width="0.9"/>
<path d="M319.7 159.8v1.6" stroke="#777" stroke-width="1"/>
<path d="M334.4 159.8v1.6" stroke="#777" stroke-width="1"/>
<path d="M349.2 159.8v1.6" stroke="#777" stroke-width="1"/>
<path d="M364.4 156v8" stroke="#555" stroke-width="0.9"/>
<path d="M378.6 159.8v1.6" stroke="#777" stroke-width="1"/>
<path d="M393.4 159.8v1.6" stroke="#777" stroke-width="1"/>
<path d="M408.1 159.8v1.6" stroke="#777" stroke-width="1"/>
<path d="M422.9 158.5v4" stroke="#666" stroke-width="0.9"/>
<path d="M437.6 159.8v1.6" stroke="#777" stroke-width="1"/>
<path d="M452.3 159.8v1.6" stroke="#777" stroke-width="1"/>
<path d="M467.1 159.8v1.6" stroke="#777" stroke-width="1"/>
<path d="M482.3 156v8" stroke="#555" stroke-width="0.9"/>
<path d="M496.5 159.8v1.6" stroke="#777" stroke-width="1"/>
<path d="M511.3 159.8v1.6" stroke="#777" stroke-width="1"/>
<path d="M526.0 159.8v1.6" stroke="#777" stroke-width="1"/>
<path d="M540.8 158.5v4" stroke="#666" stroke-width="0.9"/>
<path d="M555.5 159.8v1.6" stroke="#777" stroke-width="1"/>
<path d="M570.2 159.8v1.6" stroke="#777" stroke-width="1"/>
<path d="M585.0 159.8v1.6" stroke="#777" stroke-width="1"/>
<path d="M600.2 156v8" stroke="#555" stroke-width="0.9"/>
<path d="M614.4 159.8v1.6" stroke="#777" stroke-width="1"/>
<path d="M629.2 159.8v1.6" stroke="#777" stroke-width="1"/>
<path d="M643.9 159.8v1.6" stroke="#777" stroke-width="1"/>
<path d="M658.7 158.5v4" stroke="#666" stroke-width="0.9"/>
<path d="M673.4 159.8v1.6" stroke="#777" stroke-width="1"/>
<path d="M688.1 159.8v1.6" stroke="#777" stroke-width="1"/>
<path d="M702.9 159.8v1.6" stroke="#777" stroke-width="1"/>
<path d="M718.1 156v8" stroke="#555" stroke-width="0.9"/>
<path d="M732.3 159.8v1.6" stroke="#777" stroke-width="1"/>
<path d="M747.1 159.8v1.6" stroke="#777" stroke-width="1"/>
<path d="M761.8 159.8v1.6" stroke="#777" stroke-width="1"/>
<path d="M776.6 158.5v4" stroke="#666" stroke-width="0.9"/>
<path d="M791.3 159.8v1.6" stroke="#777" stroke-width="1"/>
<path d="M806.0 159.8v1.6" stroke="#777" stroke-width="1"/>
<path d="M820.8 159.8v1.6" stroke="#777" stroke-width="1"/>
<path d="M836.0 156v8" stroke="#555" stroke-width="0.9"/>
<path d="M850.2 159.8v1.6" stroke="#777" stroke-width="1"/>
<path d="M865.0 159.8v1.6" stroke="#777" stroke-width="1"/>
<path d="M879.7 159.8v1.6" stroke="#777" stroke-width="1"/>
<path d="M894.5 158.5v4" stroke="#666" stroke-width="0.9"/>
<path d="M909.2 159.8v1.6" stroke="#777" stroke-width="1"/>
<path d="M923.9 159.8v1.6" stroke="#777" stroke-width="1"/>
<path d="M938.7 159.8v1.6" stroke="#777" stroke-width="1"/>
<path d="M953.9 156v8" stroke="#555" stroke-width="0.9"/>
<path d="M968.1 159.8v1.6" stroke="#777" stroke-width="1"/>
<path d="M982.9 159.8v1.6" stroke="#777" stroke-width="1"/>
<path d="M997.6 159.8v1.6" stroke="#777" stroke-width="1"/>
<path d="M1012.4 158.5v4" stroke="#666" stroke-width="0.9"/>
<path d="M1027.1 159.8v1.6" stroke="#777" stroke-width="1"/>
<path d="M1041.8 159.8v1.6" stroke="#777" stroke-width="1"/>
<path d="M1056.6 159.8v1.6" stroke="#777" stroke-width="1"/>
<path d="M1071.8 156v8" stroke="#555" stroke-width="0.9"/>
<path d="M1086.0 159.8v1.6" stroke="#777" stroke-width="1"/>
<path d="M304.9 170.5v3.5" stroke="#666" stroke-width="0.9"/>
<path d="M363.9 170.5v3.5" stroke="#666" stroke-width="0.9"/>
<path d="M422.9 170.5v3.5" stroke="#666" stroke-width="0.9"/>
<path d="M481.8 170.5v3.5" stroke="#666" stroke-width="0.9"/>
<path d="M540.8 170.5v3.5" stroke="#666" stroke-width="0.9"/>
<path d="M599.7 170.5v3.5" stroke="#666" stroke-width="0.9"/>
<path d="M658.7 170.5v3.5" stroke="#666" stroke-width="0.9"/>
<path d="M717.6 170.5v3.5" stroke="#666" stroke-width="0.9"/>
<path d="M776.6 170.5v3.5" stroke="#666" stroke-width="0.9"/>
<path d="M835.5 170.5v3.5" stroke="#666" stroke-width="0.9"/>
<path d="M894.5 170.5v3.5" stroke="#666" stroke-width="0.9"/>
<path d="M241 152.5h10v2.5l-5 5-5-5z" fill="url(#gMk)" stroke="#2a63b0" stroke-width="0.8"/>
<path d="M241 167l5-5.5 5 5.5v1.5h-10z" fill="url(#gMk)" stroke="#2a63b0" stroke-width="0.8"/>
<rect x="241" y="168.5" width="10" height="4.5" rx="1" fill="url(#gMk)" stroke="#2a63b0" stroke-width="0.8"/>
<path d="M948.5 167.5v-2.5l5-4.5 5 4.5v2.5z" fill="url(#gMk)" stroke="#2a63b0" stroke-width="0.8"/>
</svg>
<svg class="a" style="left:0;top:175px" width="22" height="613" viewBox="0 175 22 613">
<defs><linearGradient id="gVR" x1="0" y1="0" x2="1" y2="0"><stop offset="0" stop-color="#ffffff"/><stop offset="0.6" stop-color="#f2f2f2"/><stop offset="1" stop-color="#d9dadc"/></linearGradient>
<linearGradient id="gVB" x1="0" y1="0" x2="1" y2="0"><stop offset="0" stop-color="#cfe2f6"/><stop offset="1" stop-color="#9dbde3"/></linearGradient></defs>
<rect x="4" y="175" width="14" height="620" fill="url(#gVR)" stroke="#b7b7b7" stroke-width="0.8"/>
<rect x="4.4" y="175" width="13.2" height="16.5" fill="url(#gVB)"/>
<path d="M4.4 191.5h13.2" stroke="#7d9cc4"/><path d="M4.4 192.5h13.2" stroke="#fff"/>

<path d="M9.6 206.2h2.6" stroke="#666" stroke-width="1"/>
<path d="M9.6 221.0h2.6" stroke="#666" stroke-width="1"/>
<path d="M9.6 235.7h2.6" stroke="#666" stroke-width="1"/>
<path d="M9 250.4h4" stroke="#666" stroke-width="0.9"/>
<path d="M9.6 265.2h2.6" stroke="#666" stroke-width="1"/>
<path d="M9.6 279.9h2.6" stroke="#666" stroke-width="1"/>
<path d="M9.6 294.7h2.6" stroke="#666" stroke-width="1"/>
<path d="M7.5 309.4h7" stroke="#555" stroke-width="0.9"/>
<text transform="translate(7.5 311.9) rotate(90)" font-family="Liberation Sans" font-size="10" fill="#444">1</text>
<path d="M9.6 324.1h2.6" stroke="#666" stroke-width="1"/>
<path d="M9.6 338.9h2.6" stroke="#666" stroke-width="1"/>
<path d="M9.6 353.6h2.6" stroke="#666" stroke-width="1"/>
<path d="M9 368.4h4" stroke="#666" stroke-width="0.9"/>
<path d="M9.6 383.1h2.6" stroke="#666" stroke-width="1"/>
<path d="M9.6 397.8h2.6" stroke="#666" stroke-width="1"/>
<path d="M9.6 412.6h2.6" stroke="#666" stroke-width="1"/>
<path d="M7.5 427.3h7" stroke="#555" stroke-width="0.9"/>
<text transform="translate(7.5 429.8) rotate(90)" font-family="Liberation Sans" font-size="10" fill="#444">2</text>
<path d="M9.6 442.0h2.6" stroke="#666" stroke-width="1"/>
<path d="M9.6 456.8h2.6" stroke="#666" stroke-width="1"/>
<path d="M9.6 471.5h2.6" stroke="#666" stroke-width="1"/>
<path d="M9 486.2h4" stroke="#666" stroke-width="0.9"/>
<path d="M9.6 501.0h2.6" stroke="#666" stroke-width="1"/>
<path d="M9.6 515.7h2.6" stroke="#666" stroke-width="1"/>
<path d="M9.6 530.5h2.6" stroke="#666" stroke-width="1"/>
<path d="M7.5 545.2h7" stroke="#555" stroke-width="0.9"/>
<text transform="translate(7.5 547.7) rotate(90)" font-family="Liberation Sans" font-size="10" fill="#444">3</text>
<path d="M9.6 559.9h2.6" stroke="#666" stroke-width="1"/>
<path d="M9.6 574.7h2.6" stroke="#666" stroke-width="1"/>
<path d="M9.6 589.4h2.6" stroke="#666" stroke-width="1"/>
<path d="M9 604.2h4" stroke="#666" stroke-width="0.9"/>
<path d="M9.6 618.9h2.6" stroke="#666" stroke-width="1"/>
<path d="M9.6 633.6h2.6" stroke="#666" stroke-width="1"/>
<path d="M9.6 648.4h2.6" stroke="#666" stroke-width="1"/>
<path d="M7.5 663.1h7" stroke="#555" stroke-width="0.9"/>
<text transform="translate(7.5 665.6) rotate(90)" font-family="Liberation Sans" font-size="10" fill="#444">4</text>
<path d="M9.6 677.8h2.6" stroke="#666" stroke-width="1"/>
<path d="M9.6 692.6h2.6" stroke="#666" stroke-width="1"/>
<path d="M9.6 707.3h2.6" stroke="#666" stroke-width="1"/>
<path d="M9 722.1h4" stroke="#666" stroke-width="0.9"/>
<path d="M9.6 736.8h2.6" stroke="#666" stroke-width="1"/>
<path d="M9.6 751.5h2.6" stroke="#666" stroke-width="1"/>
<path d="M9.6 766.3h2.6" stroke="#666" stroke-width="1"/>
<path d="M7.5 781.0h7" stroke="#555" stroke-width="0.9"/>
<text transform="translate(7.5 783.5) rotate(90)" font-family="Liberation Sans" font-size="10" fill="#444">5</text>
</svg><!--/RUL-->
<div id="docarea" class="a"></div>
<div id="page" class="a"></div>
<div id="vscroll" class="a"></div>
<div id="hscroll" class="a"></div>
<div id="status" class="a"></div>
<!--BOT-->
<svg class="a" style="left:0;top:140px" width="1194" height="680" viewBox="0 140 1194 680">
<defs>
<linearGradient id="gSB" x1="0" y1="0" x2="0" y2="1"><stop offset="0" stop-color="#f2f2f2"/><stop offset="1" stop-color="#d6d6d6"/></linearGradient>
<linearGradient id="gVBtn" x1="0" y1="0" x2="0" y2="1"><stop offset="0" stop-color="#fbfbfb"/><stop offset="1" stop-color="#dedede"/></linearGradient>
<linearGradient id="gVPress" x1="0" y1="0" x2="0" y2="1"><stop offset="0" stop-color="#4a4a4a"/><stop offset="1" stop-color="#6a6a6a"/></linearGradient>
<linearGradient id="gBlue" x1="0" y1="0" x2="0" y2="1"><stop offset="0" stop-color="#9fd0fa"/><stop offset="1" stop-color="#3d95e6"/></linearGradient>
<linearGradient id="gSide" x1="0" y1="0" x2="1" y2="0"><stop offset="0" stop-color="#000" stop-opacity="0.22"/><stop offset="0.035" stop-color="#000" stop-opacity="0.12"/><stop offset="0.07" stop-color="#000" stop-opacity="0"/><stop offset="0.95" stop-color="#000" stop-opacity="0"/><stop offset="1" stop-color="#000" stop-opacity="0.16"/></linearGradient>
<linearGradient id="gVS" x1="0" y1="0" x2="1" y2="0"><stop offset="0" stop-color="#e9e9e9"/><stop offset="0.5" stop-color="#f8f8f8"/><stop offset="1" stop-color="#fdfdfd"/></linearGradient>
</defs>
<!-- side shadows -->
<rect x="22" y="175" width="77" height="613" fill="url(#gSide)"/>
<rect x="1102" y="175" width="77" height="613" fill="url(#gSide)"/>
<rect x="22" y="175" width="77" height="2" fill="#000" opacity="0.12"/>
<rect x="1102" y="175" width="77" height="2" fill="#000" opacity="0.12"/>
<!-- vertical scrollbar -->
<rect x="1179" y="147" width="15" height="641" fill="url(#gVS)"/>
<path d="M1179.5 147v641" stroke="#d0d0d0"/>
<rect x="1183" y="214" width="8" height="263.6" rx="4" fill="#c4c4c4"/>
<!-- split button -->
<rect x="1179.5" y="149.5" width="14.5" height="11" fill="#a9c8f0" stroke="#2c5fb8"/>
<path d="M1182 152.5h9M1182 157.5h9" stroke="#1a3f8a" stroke-width="1"/>
<path d="M1179.5 155h14.5" stroke="#2c5fb8"/>
<!-- nav buttons -->
<rect x="1179.5" y="741.5" width="15" height="47" rx="4" fill="url(#gVBtn)" stroke="#9a9a9a"/>
<path d="M1180 757.5h14M1180 772.5h14" stroke="#bdbdbd"/>
<path d="M1183.5 749.5l3.5-3.5 3.5 3.5zM1183.5 754l3.5-3.5 3.5 3.5z" fill="#111"/>
<circle cx="1187" cy="765" r="3" fill="#f8f8f8" stroke="#444" stroke-width="1"/>
<path d="M1183.5 776l3.5 3.5 3.5-3.5zM1183.5 780.5l3.5 3.5 3.5-3.5z" fill="#111"/>
<!-- horizontal scroll area -->
<rect x="177" y="788" width="1017" height="15.5" fill="#f7f7f7"/>
<rect x="1179" y="788" width="15" height="15.5" fill="#ececec"/>
<path d="M177 788.5h1002" stroke="#dedede"/>
<!-- status bar -->
<rect x="177" y="803.5" width="1017" height="16.5" fill="url(#gSB)"/>
<path d="M177 803.5h1017" stroke="#8d8d8d"/>
<g stroke="#b2b2b2"><path d="M298.5 804v16M346.5 804v16M467.5 804v16M602.5 804v16M644.5 804v16"/></g>
<g stroke="#fafafa"><path d="M299.5 804v16M347.5 804v16M468.5 804v16M603.5 804v16M645.5 804v16"/></g>
<!-- book icon -->
<path d="M612.5 809.5q4-1.5 8 0.5q4-2 8-0.5v8q-4-1-8 0.5q-4-2-8-0.5z" fill="#f4ecdc" stroke="#6a4a2a" stroke-width="0.9"/>
<path d="M620.5 810v8" stroke="#6a4a2a" stroke-width="0.8"/>
<path d="M612 818.5q4-1 8.5 0.5q4.5-1.5 8.5-0.5" fill="none" stroke="#8a3a1a" stroke-width="1.3"/>
<circle cx="628" cy="808.5" r="3.8" fill="#3aa83a" stroke="#fff" stroke-width="0.7"/>
<path d="M626.2 808.5l1.3 1.4 2.4-2.8" fill="none" stroke="#fff" stroke-width="1"/>
<!-- zoom slider -->
<rect x="1065.5" y="809" width="99.5" height="5.5" rx="2.75" fill="#cfcfcf" stroke="#9a9a9a" stroke-width="0.9"/>
<circle cx="1122.7" cy="811.7" r="5.5" fill="#f4f4f4" stroke="#9a9a9a" stroke-width="0.9"/>
<circle cx="1122.7" cy="811.7" r="1.5" fill="#555"/>
<path d="M1180 819l12-12M1184 819l8-8M1188 819l4-4" stroke="#8a8a8a" stroke-width="0.9"/>
<path d="M1181 819.5l12-12M1185 819.5l8-8M1189 819.5l4-4" stroke="#fff" stroke-width="0.6"/>
<!-- view buttons panel -->
<rect x="0" y="788" width="177" height="32" fill="#ececec"/>
<path d="M176.5 788v16" stroke="#d6d6d6"/>
<rect x="3.5" y="793.5" width="170" height="22.5" rx="4" fill="url(#gVBtn)" stroke="#8e8e8e"/>
<path d="M89 794h27.5v21.5h-27.5z" fill="url(#gVPress)"/>
<g stroke="#aaaaaa"><path d="M32.5 794v21.5M60.5 794v21.5M88.5 794v21.5M116.5 794v21.5M144.5 794v21.5"/></g>
<!-- draft -->
<path d="M12 800h14M12 804.5h14M12 809h14" stroke="#222" stroke-width="1.6"/>
<!-- outline -->
<path d="M38 799.5h3M43 799.5h10M40 804.5h3M45 804.5h9M42 809h3M47 809h8" stroke="#222" stroke-width="1.5"/>
<!-- publishing -->
<rect x="66.5" y="798.5" width="16" height="11" rx="1.5" fill="#333"/>
<path d="M71 800v8M78 800v8" stroke="#ccc" stroke-width="0.8"/>
<path d="M72.5 800.5v7l2-1.8 1.3 2.8 1-0.5-1.3-2.7h2.5z" fill="#fff"/>
<!-- print layout (pressed) -->
<rect x="94.5" y="797.5" width="17" height="14" rx="2" fill="url(#gBlue)" stroke="#b7dcfb" stroke-width="0.8"/>
<path d="M96.5 801.5h13M96.5 804.5h13M96.5 807.5h13" stroke="#174e8a" stroke-width="1.1"/>
<!-- notebook -->
<rect x="122.5" y="797.5" width="16" height="14" rx="2" fill="#333"/>
<path d="M124 801h13M124 804.5h13M124 808h13M127.5 798v13" stroke="#bbb" stroke-width="0.8"/>
<!-- full screen -->
<rect x="150.5" y="797.5" width="17" height="14" rx="1.5" fill="#333"/>
<path d="M153.5 800.5l3.5 3.5M153.5 800.5v3M153.5 800.5h3M164.5 808.5l-3.5-3.5M164.5 808.5v-3M164.5 808.5h-3" stroke="#eee" stroke-width="1.1"/>
</svg>
<div class="t" style="left:183px;top:806px;font-size:10.8px;color:#1a1a1a">Print Layout View</div>
<div class="t" style="left:305px;top:806px;font-size:10.8px;color:#1a1a1a">Sec</div>
<div class="t" style="left:337px;top:806px;font-size:10.8px;color:#1a1a1a">1</div>
<div class="t" style="left:357px;top:806px;font-size:10.8px;color:#1a1a1a">Pages:</div>
<div class="t" style="left:411px;top:806px;font-size:10.8px;color:#1a1a1a">1 of 1</div>
<div class="t" style="left:476px;top:806px;font-size:10.8px;color:#1a1a1a">Words:</div>
<div class="t" style="left:539px;top:806px;font-size:10.8px;color:#1a1a1a">1 of 1</div>
<div class="t" style="left:1025.5px;top:806px;font-size:11.2px;color:#1a1a1a">164%</div>
<!--/BOT-->

<svg class="a" style="left:0;top:0" width="1194" height="820" viewBox="0 0 1194 820">
<defs>
<clipPath id="cA"><circle cx="588" cy="507.2" r="160"/></clipPath>
<clipPath id="cB"><circle cx="691.2" cy="404" r="160"/></clipPath>
<clipPath id="cC"><circle cx="794.4" cy="507.2" r="160"/></clipPath>
<clipPath id="cD"><circle cx="691.2" cy="610.4" r="160"/></clipPath>
</defs>
<rect x="247" y="191" width="316.5" height="108.7" fill="#f5f0c9"/>
<g font-family="Liberation Sans" font-size="10.2" fill="#4e4e4e" stroke="#4e4e4e" stroke-width="0.12">
<text x="281" y="209.3" textLength="260.3" lengthAdjust="spacingAndGlyphs">A Venn Diagram is a diagram that shows all the possible</text>
<text x="262.1" y="222.9" textLength="286.9" lengthAdjust="spacingAndGlyphs">logical relations between the sets. Venn diagrams are used to</text>
<text x="262.1" y="236.5" textLength="294.4" lengthAdjust="spacingAndGlyphs">illustrate simple set relationships in probability, logic, statistics,</text>
<text x="262.1" y="250.1" textLength="185.7" lengthAdjust="spacingAndGlyphs">mathematics, sociology, philosophy etc.</text>
<text x="281" y="263.7" textLength="257" lengthAdjust="spacingAndGlyphs">A Venn Diagram is also widely used in marketing. Venn</text>
<text x="262.1" y="277.3" textLength="285.2" lengthAdjust="spacingAndGlyphs">diagrams can be useful ways to visually summarize the status</text>
<text x="262.1" y="290.9" textLength="147" lengthAdjust="spacingAndGlyphs">and future viability of a project.</text>
</g>
<rect x="953.9" y="752.9" width="1.3" height="18.2" fill="#000"/>
<circle cx="588" cy="507.2" r="160" fill="#fdda80"/>
<circle cx="691.2" cy="404" r="160" fill="#cde29f"/>
<circle cx="794.4" cy="507.2" r="160" fill="#fccbae"/>
<circle cx="691.2" cy="610.4" r="160" fill="#c3dff1"/>
<g clip-path="url(#cA)"><rect x="0" y="0" width="1194" height="820" fill="#e5d56a" clip-path="url(#cB)"/></g>
<g clip-path="url(#cB)"><rect x="0" y="0" width="1194" height="820" fill="#e7c493" clip-path="url(#cC)"/></g>
<g clip-path="url(#cC)"><rect x="0" y="0" width="1194" height="820" fill="#cdcfd6" clip-path="url(#cD)"/></g>
<g clip-path="url(#cA)"><rect x="0" y="0" width="1194" height="820" fill="#cdd8bf" clip-path="url(#cD)"/></g>
<g clip-path="url(#cA)"><g clip-path="url(#cB)"><rect x="0" y="0" width="1194" height="820" fill="#f3d4a3" clip-path="url(#cC)"/></g></g>
<g clip-path="url(#cA)"><g clip-path="url(#cB)"><rect x="0" y="0" width="1194" height="820" fill="#d5dec5" clip-path="url(#cD)"/></g></g>
<g clip-path="url(#cB)"><g clip-path="url(#cC)"><rect x="0" y="0" width="1194" height="820" fill="#d6dcd6" clip-path="url(#cD)"/></g></g>
<g clip-path="url(#cA)"><g clip-path="url(#cC)"><rect x="0" y="0" width="1194" height="820" fill="#dcd9cd" clip-path="url(#cD)"/></g></g>
<g clip-path="url(#cA)"><g clip-path="url(#cB)"><g clip-path="url(#cC)"><rect x="0" y="0" width="1194" height="820" fill="#e6e5dd" clip-path="url(#cD)"/></g></g></g>
<g fill="none" stroke="#8c8c8c" stroke-width="1">
<circle cx="588" cy="507.2" r="160"/>
<circle cx="691.2" cy="404" r="160"/>
<circle cx="794.4" cy="507.2" r="160"/>
<circle cx="691.2" cy="610.4" r="160"/>
</g>
<g font-family="Liberation Sans" fill="#1c1c1c" stroke="#1c1c1c" stroke-width="0.3">
<text x="492.40" y="513.8" font-size="16" textLength="9.63" lengthAdjust="spacingAndGlyphs">A</text>
<text x="686.48" y="320.4" font-size="16" textLength="9.35" lengthAdjust="spacingAndGlyphs">B</text>
<text x="881.15" y="513.9" font-size="16.4" textLength="9.44" lengthAdjust="spacingAndGlyphs">C</text>
<text x="685.96" y="705.9" font-size="15.7" textLength="10.32" lengthAdjust="spacingAndGlyphs">D</text>
<text x="599.30" y="432.5" font-size="13.9" textLength="17.41" lengthAdjust="spacingAndGlyphs">AB</text>
<text x="766.01" y="432.5" font-size="13.9" textLength="17.17" lengthAdjust="spacingAndGlyphs">BC</text>
<text x="599.00" y="592.5" font-size="13.4" textLength="17.94" lengthAdjust="spacingAndGlyphs">AD</text>
<text x="765.48" y="592.5" font-size="13.4" textLength="17.83" lengthAdjust="spacingAndGlyphs">CD</text>
<text x="680.80" y="426.6" font-size="12" textLength="21.78" lengthAdjust="spacingAndGlyphs">ABC</text>
<text x="595.70" y="511.9" font-size="11.6" textLength="22.92" lengthAdjust="spacingAndGlyphs">ABD</text>
<text x="763.95" y="511.9" font-size="11.6" textLength="22.55" lengthAdjust="spacingAndGlyphs">BCD</text>
<text x="680.00" y="597.1" font-size="11.8" textLength="22.49" lengthAdjust="spacingAndGlyphs">ACD</text>
<text x="669.00" y="513.6" font-size="17.4" textLength="44.78" lengthAdjust="spacingAndGlyphs">ABCD</text>
</g>
</svg>
</body></html>
